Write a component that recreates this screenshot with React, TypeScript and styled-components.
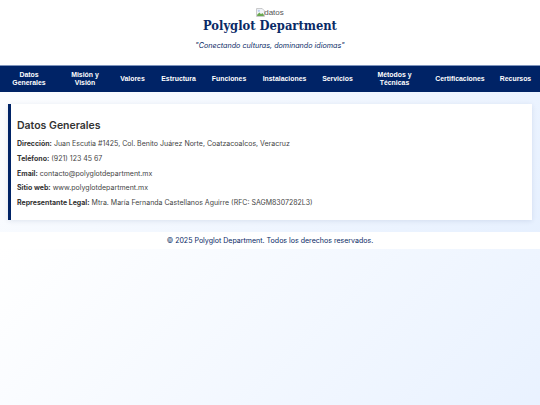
import React from "react"
import styled, { createGlobalStyle } from "styled-components"

const GlobalStyle = createGlobalStyle`
    html, body {
        margin: 0;
        padding: 0;
    }

    body {
        font-family: "Inter", "Open Sans", sans-serif;
        background: linear-gradient(135deg, #ffffff 0%, #e6f0ff 100%);
        color: #333333;
    }
`

const Header = styled.header`
    background-color: #ffffff;
    text-align: center;
    height: 65px;
    padding-top: 7px;
    box-sizing: border-box;
`

const BrokenLogo = styled.div`
    display: flex;
    justify-content: center;
    align-items: center;
    height: 10px;
    font-family: "Liberation Sans", sans-serif;
    font-size: 8px;
    color: #555555;

    svg {
        width: 9px;
        height: 9px;
        margin-right: -1px;
    }
`

const Title = styled.h1`
    margin: 0;
    font-family: "DejaVu Serif Condensed", "DejaVu Serif", serif;
    font-stretch: condensed;
    font-size: 12.8px;
    line-height: 18px;
    font-weight: 700;
    color: #0a2a66;
`

const Tagline = styled.p`
    margin: 6px 0 0;
    font-size: 7.2px;
    line-height: 10px;
    font-style: italic;
    color: #0a2a66;
`

const Nav = styled.nav`
    display: flex;
    align-items: center;
    height: 27px;
    background-color: #002366;
    border-top: 1px solid #7f95bd;
    box-sizing: border-box;
`

const NavItem = styled.a<{ $width: number }>`
    flex: 0 0 ${props => props.$width}px;
    box-sizing: border-box;
    padding: 0 5px;
    text-align: center;
    font-family: "Liberation Sans", sans-serif;
    font-size: 6.9px;
    line-height: 8px;
    font-weight: 700;
    color: #ffffff;
`

const Main = styled.main`
    padding: 12px 8px;
`

const Card = styled.section`
    background-color: #ffffff;
    border-left: 3px solid #002366;
    box-shadow: 0 1px 5px rgba(0, 35, 102, 0.1);
    padding: 15px 6px 8px;
    height: 116px;
    box-sizing: border-box;
`

const CardTitle = styled.h2`
    margin: 0 0 4px;
    font-size: 10.5px;
    line-height: 14px;
    font-weight: 600;
    color: #333333;
`

const Line = styled.p`
    margin: 0;
    font-size: 7px;
    line-height: 14.75px;
    color: #444444;

    strong {
        font-weight: 700;
        color: #333333;
    }
`

const Footer = styled.footer`
    background-color: #ffffff;
    text-align: center;
    height: 17px;
    font-size: 7.05px;
    line-height: 17px;
    color: #0a2a66;
`

const navItems = [
    { label: "Datos Generales", width: 58 },
    { label: "Misión y Visión", width: 54 },
    { label: "Valores", width: 41 },
    { label: "Estructura", width: 51 },
    { label: "Funciones", width: 50 },
    { label: "Instalaciones", width: 61 },
    { label: "Servicios", width: 45 },
    { label: "Métodos y Técnicas", width: 69 },
    { label: "Certificaciones", width: 62 },
    { label: "Recursos", width: 49 },
]

const details = [
    { name: "Dirección:", value: "Juan Escutia #1425, Col. Benito Juárez Norte, Coatzacoalcos, Veracruz" },
    { name: "Teléfono:", value: "(921) 123 45 67" },
    { name: "Email:", value: "contacto@polyglotdepartment.mx" },
    { name: "Sitio web:", value: "www.polyglotdepartment.mx" },
    { name: "Representante Legal:", value: "Mtra. María Fernanda Castellanos Aguirre (RFC: SAGM8307282L3)" },
]

export default function App() {
    return (
        <>
            <GlobalStyle />
            <Header>
                <BrokenLogo>
                    <svg viewBox="0 0 16 16">
                        <path d="M1 1h10l4 4v10H1z" fill="#f4f6fa" stroke="#a0a0a0" />
                        <path d="M2 12l4-4 3 3 2-2 3 3v2H2z" fill="#6aa84f" />
                        <circle cx="5" cy="5" r="2" fill="#b9cdf0" />
                    </svg>
                    <span>datos</span>
                </BrokenLogo>
                <Title>Polyglot Department</Title>
                <Tagline>"Conectando culturas, dominando idiomas"</Tagline>
            </Header>
            <Nav>
                {navItems.map(item => (
                    <NavItem key={item.label} $width={item.width}>{item.label}</NavItem>
                ))}
            </Nav>
            <Main>
                <Card>
                    <CardTitle>Datos Generales</CardTitle>
                    {details.map(row => (
                        <Line key={row.name}><strong>{row.name}</strong> {row.value}</Line>
                    ))}
                </Card>
            </Main>
            <Footer>© 2025 Polyglot Department. Todos los derechos reservados.</Footer>
        </>
    )
}
